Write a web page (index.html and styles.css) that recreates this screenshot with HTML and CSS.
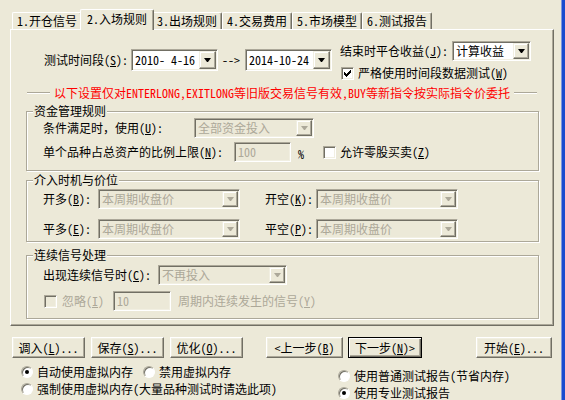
FILE: index.html
```html
<!DOCTYPE html>
<html lang="zh-CN">
<head>
    <meta charset="UTF-8">
    <meta name="viewport" content="width=device-width, initial-scale=1.0">
    <title>测试设置 - 入场规则</title>
    <link rel="stylesheet" href="styles.css">
</head>
<body>

<div class="window">
    <div class="dialog">

        <!-- Tab strip -->
        <div class="tabs">
            <div class="tab">1.开仓信号</div>
            <div class="tab active">2.入场规则</div>
            <div class="tab">3.出场规则</div>
            <div class="tab">4.交易费用</div>
            <div class="tab">5.市场模型</div>
            <div class="tab">6.测试报告</div>
        </div>

        <div class="panel">
            <div class="top">
                <div class="period">
                    <span class="period-label">测试时间段(<u>S</u>):</span>
                    <div class="field combo date"><span class="value">2010- 4-16</span><span class="drop"></span></div>
                    <span class="to">--&gt;</span>
                    <div class="field combo date"><span class="value">2014-10-24</span><span class="drop"></span></div>
                </div>
                <div class="close-side">
                    <div class="row">
                        <span class="close-label">结束时平仓收益(<u>J</u>):</span>
                        <div class="field combo profit"><span class="value">计算收益</span><span class="drop"></span></div>
                    </div>
                    <div class="check-row strict">
                        <span class="checkbox">
                            <svg width="7" height="7" viewBox="0 0 7 7"><polygon points="6,0 7,0 7,3 6,3 6,4 5,4 5,5 4,5 4,6 3,6 3,7 2,7 2,6 1,6 1,5 0,5 0,2 1,2 1,3 2,3 2,4 3,4 3,3 4,3 4,2 5,2 5,1 6,1" fill="#000"/></svg>
                        </span>
                        <span>严格使用时间段数据测试(<u>W</u>)</span>
                    </div>
                </div>
            </div>

            <div class="notice">
                <span class="rule short"></span>
                <span class="notice-text">以下设置仅对ENTERLONG,EXITLONG等旧版交易信号有效,BUY等新指令按实际指令价委托</span>
                <span class="rule"></span>
            </div>

            <!-- 资金管理 -->
            <fieldset class="group">
                <legend>资金管理规则</legend>
                <div class="row first">
                    <span class="use-label">条件满足时，使用(<u>U</u>):</span>
                    <div class="field combo disabled use"><span class="value">全部资金投入</span><span class="drop"></span></div>
                </div>
                <div class="row second">
                    <span class="ratio-label">单个品种占总资产的比例上限(<u>N</u>):</span>
                    <div class="field disabled ratio">100</div>
                    <span class="pct">%</span>
                    <span class="checkbox odd-lot"></span>
                    <span>允许零股买卖(<u>Z</u>)</span>
                </div>
            </fieldset>

            <!-- 介入时机 -->
            <fieldset class="group price">
                <legend>介入时机与价位</legend>
                <div class="price-grid">
                    <span>开多(<u>B</u>):</span>
                    <div class="field combo disabled price-combo"><span class="value">本周期收盘价</span><span class="drop"></span></div>
                    <span>开空(<u>K</u>):</span>
                    <div class="field combo disabled price-combo"><span class="value">本周期收盘价</span><span class="drop"></span></div>
                    <span>平多(<u>E</u>):</span>
                    <div class="field combo disabled price-combo"><span class="value">本周期收盘价</span><span class="drop"></span></div>
                    <span>平空(<u>P</u>):</span>
                    <div class="field combo disabled price-combo"><span class="value">本周期收盘价</span><span class="drop"></span></div>
                </div>
            </fieldset>

            <!-- 连续信号 -->
            <fieldset class="group repeat">
                <legend>连续信号处理</legend>
                <div class="row first">
                    <span class="repeat-label">出现连续信号时(<u>C</u>):</span>
                    <div class="field combo disabled repeat-combo"><span class="value">不再投入</span><span class="drop"></span></div>
                </div>
                <div class="row second muted">
                    <span class="checkbox disabled ignore-box"></span>
                    <span class="ignore-label">忽略(<u>I</u>)</span>
                    <div class="field disabled count">10</div>
                    <span class="count-label">周期内连续发生的信号(<u>Y</u>)</span>
                </div>
            </fieldset>
        </div>

        <div class="buttons">
            <button class="btn">调入(<u>L</u>)...</button>
            <button class="btn">保存(<u>S</u>)...</button>
            <button class="btn">优化(<u>O</u>)...</button>
            <button class="btn prev">&lt;上一步(<u>B</u>)</button>
            <button class="btn default">下一步(<u>N</u>)&gt;</button>
            <button class="btn start">开始(<u>E</u>)...</button>
        </div>

        <div class="options">
            <div class="memory">
                <div class="line">
                    <span class="radio checked"></span><span>自动使用虚拟内存</span>
                    <span class="radio gap"></span><span>禁用虚拟内存</span>
                </div>
                <div class="line">
                    <span class="radio"></span><span>强制使用虚拟内存(大量品种测试时请选此项)</span>
                </div>
            </div>
            <div class="report">
                <div class="line"><span class="radio"></span><span>使用普通测试报告(节省内存)</span></div>
                <div class="line"><span class="radio checked"></span><span>使用专业测试报告</span></div>
            </div>
        </div>

    </div>
    <div class="edge"></div>
</div>

</body>
</html>
```

FILE: styles.css
```css
/* General */
* {
    box-sizing: border-box;
}

body {
    margin: 0;
    background: #ece9d8;
    color: #000;
    font-family: "Noto Sans Mono CJK SC", "Noto Sans CJK SC", sans-serif;
    font-size: 12px;
    line-height: 14px;
}

u {
    text-underline-offset: 1px;
}

.window {
    display: flex;
    height: 400px;
}

.dialog {
    width: 561px;
    padding: 0 7px 0 10px;
}

.edge {
    flex: 1;
    background: #1a4ccf;
    border-left: 1px solid #7d97dc;
}

/* Tabs */
.tabs {
    display: flex;
    align-items: flex-end;
    height: 21px;
    margin: 9px 0 -1px 2px;
    position: relative;
    z-index: 1;
}

.tab {
    height: 17px;
    margin-bottom: 1px;
    padding: 1px 4px 0;
    border: 1px solid;
    border-color: #fff #716f64 transparent #fff;
    border-bottom: 0;
    border-radius: 2px 2px 0 0;
    box-shadow: inset -1px 0 #aca899;
    background: #ece9d8;
    white-space: nowrap;
}

.tab.active {
    height: 21px;
    margin: 0 -2px;
    padding: 2px 6px 0;
    position: relative;
    z-index: 2;
}

/* Panel */
.panel {
    height: 297px;
    padding-top: 11px;
    border: 1px solid;
    border-color: #fff #716f64 #716f64 #fff;
    box-shadow: inset -1px -1px #aca899;
}

.row, .check-row {
    display: flex;
    align-items: center;
    white-space: nowrap;
}

/* Win classic controls */
.field {
    display: flex;
    align-items: center;
    height: 20px;
    padding: 0 1px 0 3px;
    background: #fff;
    border: 1px solid;
    border-color: #aca899 #fff #fff #aca899;
    box-shadow: inset 1px 1px #716f64, inset -1px -1px #f1efe2;
    white-space: nowrap;
}

.field.disabled {
    background: #ece9d8;
    color: #aca899;
}

.combo .value {
    flex: 1;
}

.drop {
    width: 16px;
    height: 16px;
    display: flex;
    align-items: center;
    justify-content: center;
    background: #ece9d8;
    border: 1px solid;
    border-color: #f1efe2 #716f64 #716f64 #f1efe2;
    box-shadow: inset -1px -1px #aca899, inset 1px 1px #fff;
}

.drop::after {
    content: "";
    box-sizing: content-box;
    width: 1px;
    border-left: 3px solid transparent;
    border-right: 3px solid transparent;
    border-top: 4px solid #000;
}

.disabled .drop::after {
    border-top-color: #aca899;
}

.checkbox {
    width: 13px;
    height: 13px;
    flex: none;
    display: flex;
    align-items: center;
    justify-content: center;
    background: #fff;
    border: 1px solid;
    border-color: #aca899 #fff #fff #aca899;
    box-shadow: inset 1px 1px #716f64, inset -1px -1px #f1efe2;
}

.checkbox.disabled {
    background: #ece9d8;
}

.checkbox svg {
    display: block;
}

.radio {
    width: 12px;
    height: 12px;
    flex: none;
    display: flex;
    align-items: center;
    justify-content: center;
    margin-right: 4px;
    border-radius: 50%;
    background: #fff;
    border: 1px solid;
    border-color: #aca899 #fff #fff #aca899;
    box-shadow: inset 1px 1px #716f64;
}

.radio.checked::after {
    content: "";
    width: 4px;
    height: 4px;
    border-radius: 50%;
    background: #000;
}

/* Top area */
.top {
    display: flex;
    align-items: flex-start;
}

.period {
    display: flex;
    align-items: center;
    margin: 8px 0 0 33px;
    white-space: nowrap;
}

.period-label {
    width: 87px;
}

.date {
    width: 87px;
    height: 22px;
}

.date .drop {
    width: 17px;
    height: 18px;
}

.to {
    margin: 0 5px 0 4px;
}

.close-side {
    margin-left: 8px;
}

.close-label {
    width: 112px;
}

.profit {
    width: 79px;
}

.strict {
    margin: 5px 0 0 1px;
}

.strict .checkbox {
    margin-right: 4px;
}

/* Red notice line */
.notice {
    display: flex;
    align-items: center;
    margin: 6px 16px 0;
    white-space: nowrap;
}

.rule {
    flex: 1;
    height: 2px;
    border-top: 1px solid #aca899;
    border-bottom: 1px solid #fff;
}

.rule.short {
    flex: none;
    width: 23px;
}

.notice-text {
    color: #f00;
    margin: 0 4px;
}

/* Group boxes */
.group {
    min-width: 0;
    margin: 4px 14px 0 15px;
    padding: 0 0 8px 16px;
    border: 1px solid #aca899;
    box-shadow: inset 1px 1px #fff, 1px 1px #fff;
}

.group legend {
    margin-left: -10px;
    padding: 0 1px;
    line-height: 14px;
    background: #ece9d8;
}

.group .row {
    height: 20px;
}

.group .row.second {
    margin-top: 4px;
}

.use-label {
    width: 151px;
}

.use {
    width: 120px;
}

.ratio-label {
    width: 191px;
}

.ratio {
    width: 57px;
}

.pct {
    margin: 4px 0 0 7px;
}

.odd-lot {
    margin: 0 4px 0 19px;
}

/* Price group */
.group.price {
    margin-top: 2px;
    padding-bottom: 2px;
}

.price-grid {
    display: grid;
    grid-template-columns: 55px 167px 51px 142px;
    row-gap: 10px;
    align-items: center;
    margin-top: 2px;
}

.price-combo {
    width: 142px;
}

/* Repeat group */
.group.repeat {
    margin-top: 6px;
    padding-bottom: 7px;
}

.group.repeat .row.first {
    margin-top: 3px;
}

.group.repeat .row.second {
    margin-top: 6px;
}

.repeat-label {
    width: 115px;
}

.repeat-combo {
    width: 129px;
}

.muted {
    color: #aca899;
}

.ignore-box {
    margin: 0 5px 0 1px;
}

.ignore-label {
    width: 51px;
}

.count {
    width: 58px;
}

.count-label {
    margin-left: 7px;
}

/* Buttons */
.buttons {
    display: flex;
    margin: 11px 2px 0;
}

.btn {
    width: 73px;
    height: 21px;
    margin-right: 6px;
    padding: 0;
    font: inherit;
    color: #000;
    background: #ece9d8;
    border: 1px solid;
    border-color: #fff #716f64 #716f64 #fff;
    box-shadow: inset -1px -1px #aca899, inset 1px 1px #f1efe2;
    white-space: nowrap;
}

.btn.prev {
    width: 77px;
    margin: 0 5px 0 17px;
}

.btn.default {
    width: 74px;
    border-color: #000;
    box-shadow: inset 1px 1px #fff, inset -1px -1px #716f64, inset -2px -2px #aca899;
}

.btn.start {
    width: 76px;
    margin: 0 0 0 auto;
}

/* Radio options */
.options {
    display: flex;
    margin-top: 7px;
    padding-left: 11px;
}

.memory {
    width: 317px;
}

.report {
    margin-top: 4px;
}

.line {
    display: flex;
    align-items: center;
    height: 14px;
    white-space: nowrap;
}

.line + .line {
    margin-top: 3px;
}

.radio.gap {
    margin-left: 10px;
}
```
